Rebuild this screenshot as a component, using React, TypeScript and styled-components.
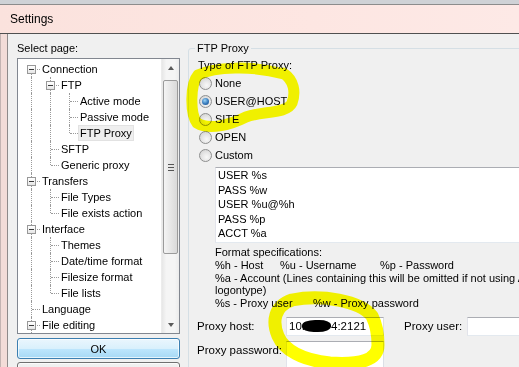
import styled, { createGlobalStyle } from "styled-components";

const GlobalStyle = createGlobalStyle`
  html, body {
    margin: 0;
    padding: 0;
    overflow: hidden;
    background: #f0f0f0;
  }
  body {
    font-family: "Liberation Sans", "DejaVu Sans", sans-serif;
    color: #000;
  }
`;

type Guide = "first" | "tee" | "elbow" | "line";

interface TreeRow {
  label: string;
  guides: Guide[];
  expanded?: boolean;
  selected?: boolean;
}

const treeRows: TreeRow[] = [
  { label: "Connection", guides: ["first"], expanded: true },
  { label: "FTP", guides: ["line", "tee"], expanded: true },
  { label: "Active mode", guides: ["line", "line", "tee"] },
  { label: "Passive mode", guides: ["line", "line", "tee"] },
  { label: "FTP Proxy", guides: ["line", "line", "elbow"], selected: true },
  { label: "SFTP", guides: ["line", "tee"] },
  { label: "Generic proxy", guides: ["line", "elbow"] },
  { label: "Transfers", guides: ["tee"], expanded: true },
  { label: "File Types", guides: ["line", "tee"] },
  { label: "File exists action", guides: ["line", "elbow"] },
  { label: "Interface", guides: ["tee"], expanded: true },
  { label: "Themes", guides: ["line", "tee"] },
  { label: "Date/time format", guides: ["line", "tee"] },
  { label: "Filesize format", guides: ["line", "tee"] },
  { label: "File lists", guides: ["line", "elbow"] },
  { label: "Language", guides: ["tee"] },
  { label: "File editing", guides: ["tee"], expanded: true },
];

const proxyTypes = ["None", "USER@HOST", "SITE", "OPEN", "Custom"];
const customScript = ["USER %s", "PASS %w", "USER %u@%h", "PASS %p", "ACCT %a"];

function App(): JSX.Element {
  return (
    <>
      <GlobalStyle />
      <Window>
        <TopEdge />
        <TitleBar>Settings</TitleBar>
        <Frame>
          <SideFrame />
          <Client>
            <PageColumn>
              <Caption>Select page:</Caption>
              <TreeBox>
                <TreeList>
                  {treeRows.map((row) => (
                    <TreeItem key={row.label}>
                      {row.guides.map((g, i) => (
                        <GuideCell key={i} $kind={g}>
                          {row.expanded && i === row.guides.length - 1 && <ExpandBox />}
                        </GuideCell>
                      ))}
                      <ItemLabel $selected={row.selected}>{row.label}</ItemLabel>
                    </TreeItem>
                  ))}
                </TreeList>
                <ScrollBar>
                  <ArrowButton>
                    <Arrow $up />
                  </ArrowButton>
                  <Thumb>
                    <Grip />
                  </Thumb>
                  <Track />
                  <ArrowButton>
                    <Arrow />
                  </ArrowButton>
                </ScrollBar>
              </TreeBox>
              <DialogButton $primary>OK</DialogButton>
              <DialogButton>Cancel</DialogButton>
            </PageColumn>

            <GroupBox>
              <Legend>FTP Proxy</Legend>
              <GroupBody>
                <FieldCaption>Type of FTP Proxy:</FieldCaption>
                <RadioList>
                  {proxyTypes.map((t) => (
                    <RadioRow key={t}>
                      <RadioCircle $checked={t === "USER@HOST"} />
                      {t}
                    </RadioRow>
                  ))}
                </RadioList>
                <CommandBox>
                  {customScript.map((line) => (
                    <div key={line}>{line}</div>
                  ))}
                </CommandBox>
                <SpecBlock>
                  <SpecLine>Format specifications:</SpecLine>
                  <SpecLine>
                    <SpecCell $w={65}>%h - Host</SpecCell>
                    <SpecCell $w={100}>%u - Username</SpecCell>
                    <SpecCell>%p - Password</SpecCell>
                  </SpecLine>
                  <SpecLine>%a - Account (Lines containing this will be omitted if not using Account</SpecLine>
                  <SpecLine>logontype)</SpecLine>
                  <SpecLine>
                    <SpecCell $w={98}>%s - Proxy user</SpecCell>
                    <SpecCell>%w - Proxy password</SpecCell>
                  </SpecLine>
                </SpecBlock>
                <FieldRow $top={7}>
                  <FieldLabel $w={89}>Proxy host:</FieldLabel>
                  <TextBox $w={98}>
                    10.<Redaction />4:2121
                  </TextBox>
                  <FieldLabel $w={63} $gap={20}>
                    Proxy user:
                  </FieldLabel>
                  <TextBox $w={100} />
                </FieldRow>
                <FieldRow $top={5}>
                  <FieldLabel $w={89}>Proxy password:</FieldLabel>
                  <TextBox $w={98} $h={32} />
                </FieldRow>
              </GroupBody>
            </GroupBox>
          </Client>
        </Frame>

        <MarkerLayer viewBox="0 0 519 367" width={519} height={367}>
          <path
            d="M 284 74 C 252 65, 214 67, 198 75 C 190 84, 190 114, 197 123 C 210 131, 232 124, 246 117 C 262 111, 287 114, 292 103 C 296 92, 294 80, 283 73"
            fill="none"
            stroke="#ffff00"
            strokeWidth={11}
            strokeLinecap="round"
            strokeLinejoin="round"
          />
          <path
            d="M 372 316 C 360 301, 322 294, 292 300 C 274 306, 272 322, 278 336 C 284 350, 302 360, 330 363 C 360 365, 378 360, 378 345 C 378 332, 376 324, 372 316"
            fill="none"
            stroke="#ffff00"
            strokeWidth={13}
            strokeLinecap="round"
            strokeLinejoin="round"
          />
        </MarkerLayer>
      </Window>
    </>
  );
}

const Window = styled.div`
  position: relative;
  width: 519px;
  height: 367px;
  overflow: hidden;
  display: flex;
  flex-direction: column;
  background: #f0f0f0;
`;

const TopEdge = styled.div`
  height: 4px;
  flex: none;
  background: #cfd2d6;
  border-bottom: 1px solid #8c8c8c;
`;

const TitleBar = styled.div`
  height: 28px;
  flex: none;
  display: flex;
  align-items: center;
  padding-left: 10px;
  font-size: 12px;
  background: linear-gradient(90deg, #fbe2dd, #fde6e2 60%, #fde9e6);
  border-bottom: 1px solid #505050;
`;

const Frame = styled.div`
  flex: 1;
  display: flex;
  min-height: 0;
`;

const SideFrame = styled.div`
  width: 6px;
  flex: none;
  background: #f3dcd8;
  border-left: 1px solid #c4b4b2;
  border-right: 1px solid #8f8a8a;
`;

const Client = styled.div`
  flex: 1;
  display: flex;
  align-items: flex-start;
  overflow: hidden;
  background: #f0f0f0;
`;

const PageColumn = styled.div`
  flex: none;
  width: 163px;
  margin-left: 9px;
  padding-top: 7px;
  display: flex;
  flex-direction: column;
`;

const Caption = styled.div`
  font-size: 11px;
  line-height: 14px;
  height: 14px;
  margin-bottom: 3px;
`;

const TreeBox = styled.div`
  height: 274px;
  display: flex;
  background: #fff;
  border: 1px solid #828790;
`;

const TreeList = styled.div`
  flex: 1;
  overflow: hidden;
  padding: 2px 0 0 4px;
`;

const TreeItem = styled.div`
  display: flex;
  align-items: center;
  height: 16px;
  white-space: nowrap;
`;

const GuideCell = styled.span<{ $kind: Guide }>`
  position: relative;
  flex: none;
  width: 19px;
  height: 16px;

  &::before {
    content: "";
    position: absolute;
    left: 9px;
    top: ${(p) => (p.$kind === "first" ? "8px" : "0")};
    height: ${(p) => (p.$kind === "first" || p.$kind === "elbow" ? "8px" : "16px")};
    border-left: 1px dotted #9a9a9a;
  }

  &::after {
    content: "";
    display: ${(p) => (p.$kind === "line" ? "none" : "block")};
    position: absolute;
    left: 10px;
    top: 8px;
    width: 8px;
    border-top: 1px dotted #9a9a9a;
  }
`;

const ExpandBox = styled.span`
  position: absolute;
  z-index: 1;
  left: 5px;
  top: 4px;
  width: 7px;
  height: 7px;
  border: 1px solid #989898;
  background: linear-gradient(#ffffff, #e6e6e6);

  &::after {
    content: "";
    position: absolute;
    left: 1px;
    top: 3px;
    width: 5px;
    height: 1px;
    background: #3a3a3a;
  }
`;

const ItemLabel = styled.span<{ $selected?: boolean }>`
  font-size: 11px;
  line-height: 14px;
  padding: 0 1px;
  background: ${(p) => (p.$selected ? "#efefef" : "transparent")};
  outline: ${(p) => (p.$selected ? "1px solid #e2e2e2" : "none")};
`;

const ScrollBar = styled.div`
  flex: none;
  width: 17px;
  display: flex;
  flex-direction: column;
  background: linear-gradient(90deg, #e7e7e7, #f5f5f5 25%, #f5f5f5 75%, #ececec);
  border-left: 1px solid #ececec;
`;

const ArrowButton = styled.div`
  height: 17px;
  flex: none;
  display: flex;
  align-items: center;
  justify-content: center;
`;

const Arrow = styled.span<{ $up?: boolean }>`
  width: 0;
  height: 0;
  border-left: 3.5px solid transparent;
  border-right: 3.5px solid transparent;
  ${(p) =>
    p.$up
      ? "border-bottom: 4px solid #5a5a5a;"
      : "border-top: 4px solid #5a5a5a;"}
`;

const Thumb = styled.div`
  margin: 4px 1px 0;
  height: 172px;
  flex: none;
  display: flex;
  align-items: center;
  justify-content: center;
  border: 1px solid #9b9b9b;
  border-radius: 2px;
  background: linear-gradient(90deg, #f4f4f4, #e8e8e8 45%, #d9d9d9);
`;

const Grip = styled.span`
  width: 6px;
  height: 7px;
  background: repeating-linear-gradient(#555 0 1px, transparent 1px 3px);
`;

const Track = styled.div`
  flex: 1;
`;

const DialogButton = styled.div<{ $primary?: boolean }>`
  height: 19px;
  flex: none;
  margin-top: ${(p) => (p.$primary ? "4px" : "3px")};
  display: flex;
  align-items: center;
  justify-content: center;
  font-size: 11px;
  border-radius: 3px;
  border: 1px solid ${(p) => (p.$primary ? "#3c7fb1" : "#707070")};
  background: ${(p) =>
    p.$primary
      ? "linear-gradient(#eaf6fd, #d9f0fc 50%, #bee6fd 50%, #a7d9f5)"
      : "linear-gradient(#f2f2f2, #ebebeb 50%, #dddddd 50%, #cfcfcf)"};
  box-shadow: inset 0 0 0 1px rgba(255, 255, 255, 0.7);
`;

const GroupBox = styled.fieldset`
  flex: none;
  width: 340px;
  min-width: 0;
  margin: 7px 0 0 8px;
  padding: 0 0 0 6px;
  border: 1px solid #d5dfe5;
  border-radius: 3px;
  box-sizing: border-box;
  height: 400px;
`;

const Legend = styled.legend`
  font-size: 11px;
  line-height: 14px;
  padding: 0 2px;
`;

const GroupBody = styled.div`
  padding: 3px 0 0 3px;
  display: flex;
  flex-direction: column;
  align-items: flex-start;
`;

const FieldCaption = styled.div`
  font-size: 11px;
  line-height: 14px;
`;

const RadioList = styled.div`
  margin-top: 2px;
  display: flex;
  flex-direction: column;
`;

const RadioRow = styled.div`
  height: 18px;
  display: flex;
  align-items: center;
  gap: 3px;
  font-size: 11px;
`;

const RadioCircle = styled.span<{ $checked?: boolean }>`
  position: relative;
  flex: none;
  margin-left: 1px;
  width: 11px;
  height: 11px;
  border-radius: 50%;
  border: 1px solid #8e8f8f;
  background: radial-gradient(circle at 60% 65%, #f8f8f8 0%, #e6e6e6 45%, #cdcdcd 100%);

  &::after {
    content: "";
    display: ${(p) => (p.$checked ? "block" : "none")};
    position: absolute;
    left: 2px;
    top: 2px;
    width: 7px;
    height: 7px;
    border-radius: 50%;
    background: radial-gradient(circle at 40% 35%, #9bd4f6 0%, #3578bb 55%, #1c4c80 100%);
  }
`;

const CommandBox = styled.div`
  margin: 3px 0 0 17px;
  width: 320px;
  height: 74px;
  padding: 0 2px;
  background: #fff;
  border: 1px solid;
  border-color: #abadb3 #dbdfe6 #e3e9ef #e2e3ea;
  font-size: 11px;
  line-height: 14.5px;
  white-space: pre;
`;

const SpecBlock = styled.div`
  margin: 3px 0 0 17px;
  font-size: 11px;
  line-height: 12.75px;
`;

const SpecLine = styled.div`
  display: flex;
  white-space: nowrap;
`;

const SpecCell = styled.span<{ $w?: number }>`
  flex: none;
  width: ${(p) => (p.$w ? `${p.$w}px` : "auto")};
`;

const FieldRow = styled.div<{ $top: number }>`
  margin: ${(p) => p.$top}px 0 0 -1px;
  display: flex;
  align-items: flex-start;
`;

const FieldLabel = styled.span<{ $w: number; $gap?: number }>`
  flex: none;
  width: ${(p) => p.$w}px;
  margin-left: ${(p) => p.$gap ?? 0}px;
  font-size: 11.5px;
  line-height: 19px;
`;

const TextBox = styled.div<{ $w: number; $h?: number }>`
  flex: none;
  box-sizing: border-box;
  width: ${(p) => p.$w}px;
  height: ${(p) => p.$h ?? 19}px;
  padding-left: 2px;
  display: flex;
  align-items: center;
  background: #fff;
  border: 1px solid;
  border-color: #abadb3 #dbdfe6 #e3e9ef #e2e3ea;
  font-size: 11.5px;
  white-space: nowrap;
`;

const Redaction = styled.span`
  display: inline-block;
  flex: none;
  width: 29px;
  height: 12px;
  margin: 0 0 0 -3px;
  background: #000;
  border-radius: 45% 40% 45% 40%;
`;

const MarkerLayer = styled.svg`
  position: absolute;
  left: 0;
  top: 0;
  pointer-events: none;
  mix-blend-mode: multiply;
`;

export default App;
